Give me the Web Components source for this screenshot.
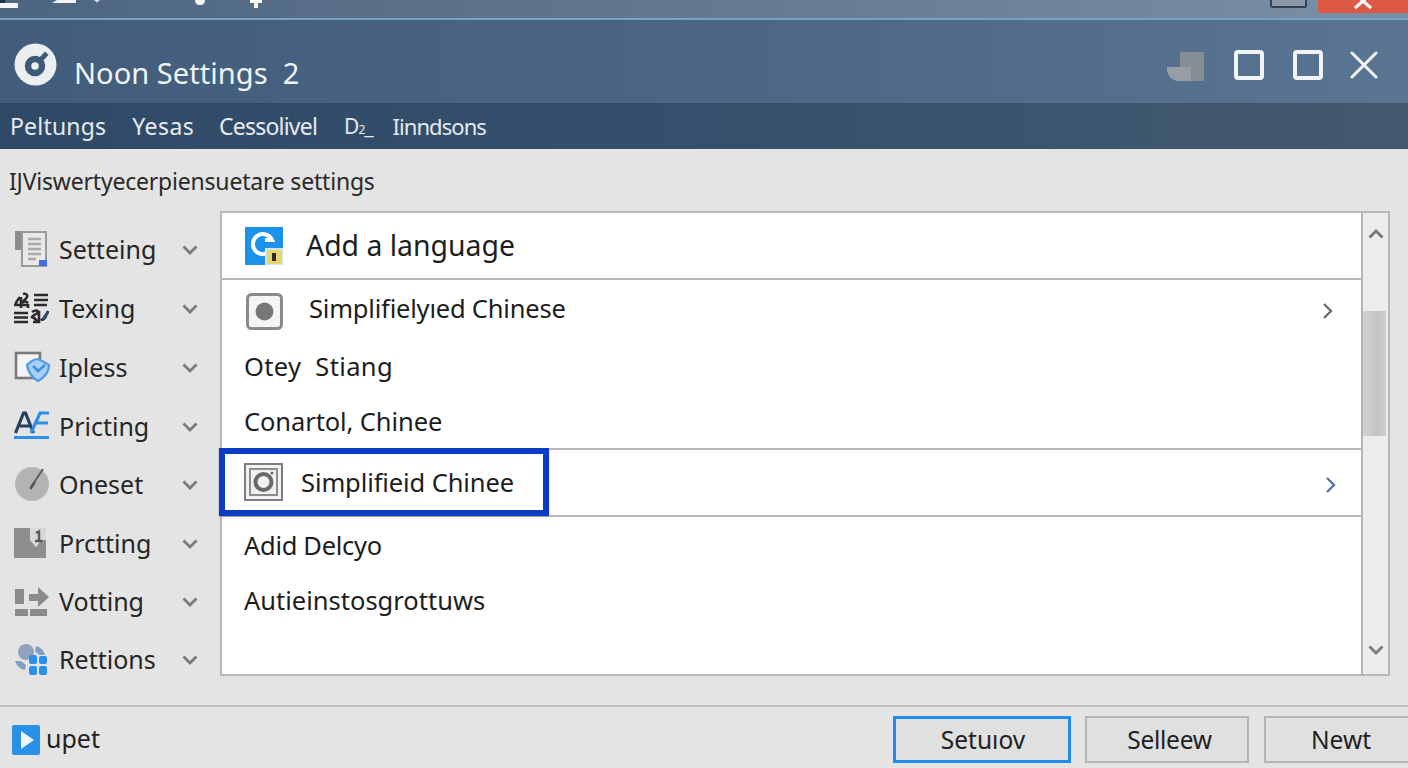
<!DOCTYPE html>
<html><head><meta charset="utf-8"><style>
html,body{margin:0;padding:0;height:100%;overflow:hidden;background:#e3e4e3}
body{font-family:"Noto Sans",sans-serif;color:#222}
</style></head><body>
<settings-window></settings-window>
<script>
function el(name,html,css){
  customElements.define(name,class extends HTMLElement{
    constructor(){super();const r=this.attachShadow({mode:'open'});
      r.innerHTML='<style>'+css+'</style>'+(typeof html==='function'?html(this):html);}
  });
}
const CHEV='<svg width="16" height="10" viewBox="0 0 16 10"><path d="M1.500 1.500 8 8l6.500-6.500" fill="none" stroke="#7b7b7b" stroke-width="2.800"/></svg>';
const ICONS={
 doc:'<svg width="34" height="38" viewBox="0 0 34 38"><rect x="1" y="1" width="15" height="19" fill="#8c8c8c"/><rect x="8" y="2" width="24" height="34" fill="#e9e9e9" stroke="#9a9a9a" stroke-width="2"/><path d="M14 9h13M14 14h13M14 19h13M14 24h13M14 29h8" stroke="#aaa" stroke-width="2.400"/><rect x="25" y="30" width="8" height="6" fill="#3f6fe0"/></svg>',
 tex:'<svg width="38" height="32" viewBox="0 0 38 32" style="margin-left:-2px"><g fill="none" stroke="#2b2b2b" stroke-width="2.600"><path d="M22 3h14M22 8h14M22 13h13M2 21h14M2 25.500h14M2 30h14"/><path d="M2 13h14v3M9 5v11M4 13c-1-3 2-5 4-8M11 2c3-1 5 1 4 3s-3 3-4 5c2-1 4 0 5 1"/><path d="M20 20c3-2 6-2 6 0s-5 3-6 5c2 1 4 1 5 5h-4M27 19v11h-3M29 27c2 2 4 0 7-8"/></g><path d="M31 27l5-7" stroke="#2c4f80" stroke-width="3"/></svg>',
 check:'<svg width="38" height="32" viewBox="0 0 38 32"><rect x="2" y="2" width="24" height="25" fill="#f4f4f4" stroke="#7a7a7a" stroke-width="2.600"/><path d="M13 14c3-3 8-6 11-6 4 2 8 4 11 6 0 7-5 13-11 16-5-3-10-9-11-16z" fill="#a9cff5" stroke="#4d9be6" stroke-width="2.200"/><path d="M19 15l5 5 7-6" fill="none" stroke="#3a8fe0" stroke-width="2.500"/></svg>',
 af:'<svg width="36" height="30" viewBox="0 0 36 30"><path d="M1.500 22 9.500 2h2l8 20M5 15h12" fill="none" stroke="#24405f" stroke-width="3.200"/><path d="M17 22 26 2h9M22 12h12" fill="none" stroke="#2f8fe8" stroke-width="3.200"/><rect x="0" y="25" width="35" height="3" fill="#2d8fe8"/></svg>',
 gauge:'<svg width="36" height="36" viewBox="0 0 36 36"><circle cx="18" cy="18" r="17" fill="#b4b4b4"/><path d="M17 21 29 3" stroke="#5f5f5f" stroke-width="2.200"/><path d="M17 24l-1.500-2 4-6.500 2.500 1.500z" fill="#5a5a5a"/></svg>',
 page:'<svg width="33" height="31" viewBox="0 0 33 31"><path d="M0 1h16v12l6 7 5-7h5v18H0z" fill="#8e8e8e"/><path d="M16 1h16v12h-5l-5 7-6-7z" fill="#d8d8d8"/><path d="M22 6l3-1.500V14M21 14h7" fill="none" stroke="#5c5c5c" stroke-width="2.400"/></svg>',
 vote:'<svg width="36" height="30" viewBox="0 0 36 30"><g fill="#8b8b8b"><rect x="1" y="3" width="9" height="15"/><rect x="1" y="23" width="13" height="7"/><rect x="16" y="23" width="17" height="7"/><path d="M15 8h9V1l11 10-11 10v-6h-9z"/></g></svg>',
 apps:'<svg width="34" height="34" viewBox="0 0 34 34"><circle cx="12" cy="10" r="8" fill="#8ea3bb"/><path d="M1 19c2 5 5 8 10 9l1-5-5-4zM22 4c4 1 8 4 9 9h-6l-4-4z" fill="#7ea0c6"/><g fill="#2b8ff0"><rect x="15" y="13" width="8" height="9" rx="2"/><rect x="25" y="14" width="8" height="8" rx="2"/><rect x="15" y="24" width="8" height="9" rx="2"/><rect x="25" y="24" width="8" height="9" rx="2"/></g></svg>'
};
el('top-strip',`<svg class="frag" width="270" height="9" viewBox="0 0 270 9"><path d="M0 0h5v3h13v5H0z" fill="#f2f4f6"/><rect x="0" y="0" width="5" height="3" fill="#20303f"/><path d="M52 3 57 0h19v3z" fill="#f2f4f6"/><path d="M94 0h6l-3 2.500z" fill="#dfe4e9"/><path d="M195 0h10c0 3-2 5-5 5s-5-2-5-5z" fill="#f6f7f8"/><path d="M250 0h12v3h-4v5h-4V3h-4z" fill="#f6f7f8"/></svg>
<span class="sp"></span><i class="box"></i><b class="close"><svg width="24" height="13" viewBox="0 0 24 13"><path d="M4-6 20 8M20-6 4 8" stroke="#fff" stroke-width="3"/></svg></b>`,
`:host{display:flex;height:18px;border-bottom:2px solid #7c9fc4;box-sizing:content-box;background:linear-gradient(90deg,#4d6581,#64798f 50%,#7b8fa7);align-items:flex-start;overflow:hidden}
.frag{flex:none;display:block}
.sp{flex:1}
.box{display:block;flex:none;width:33px;height:6px;background:#8b99aa;border:2px solid #33404f;border-top:0;border-radius:0 0 3px 3px;margin-right:11px}
.close{display:flex;justify-content:center;width:90px;height:13px;background:#dc5a45;border-radius:0 0 0 2px}`);
el('title-bar',`<svg class="logo" width="44" height="44" viewBox="0 0 44 44"><circle cx="21.500" cy="21.500" r="21" fill="#ecefef"/><circle cx="21" cy="23" r="7" fill="none" stroke="#3d5a78" stroke-width="6.500"/><path d="M23.500 16.500 31 8.500l3.500 3.500-7.500 8z" fill="#3d5a78"/></svg>
<span class="t">Noon Settings&nbsp; 2</span><span class="sp"></span>
<svg class="s" width="38" height="30" viewBox="0 0 38 30"><path d="M13 0h24v29H24V15H13z" fill="#858d97"/><path d="M0 15h24v14H10Q2 27 0 19z" fill="#969da5"/></svg>
<i></i><i></i><svg class="x" width="28" height="28" viewBox="0 0 28 28"><path d="M2 2 26 26M26 2 2 26" stroke="#f2f4f6" stroke-width="3" stroke-linecap="round"/></svg>`,
`:host{display:flex;align-items:center;height:83px;box-sizing:border-box;padding-top:12px;background:linear-gradient(90deg,#415d7b,#4a6684 50%,#5a7592);color:#f0f3f5;padding-left:14px}
.logo{flex:none;margin-top:-5px}.t{font-size:29px;margin-left:16px;margin-top:10px;white-space:nowrap;letter-spacing:.05px}
.sp{flex:1}.s{margin-right:29px;margin-top:-2px}
i{display:block;box-sizing:border-box;width:30px;height:30px;border:4px solid #f2f4f6;border-radius:4px;margin-right:29px;margin-top:-5px}
i+i{margin-right:27px}.x{margin-right:30px;margin-top:-5px}`);
el('menu-bar',`<slot></slot>`,
`:host{display:flex;align-items:center;height:46px;background:linear-gradient(90deg,#2f4a67,#35506c 50%,#43596f);color:#e6eaee;font-size:23px;padding-left:10px;box-sizing:border-box;white-space:nowrap}`);
el('side-item',t=>`<span class="i">${ICONS[t.getAttribute('icon')]}</span><span class="t"><slot></slot></span>${CHEV}`,
`:host{display:flex;align-items:center;height:58.500px;font-size:25px;color:#262626;white-space:nowrap}
.i{width:45px;flex:none;display:flex;align-items:center;margin-left:14px}
.t{flex:1}svg{flex:none;display:block}:host>svg{margin-top:2px}`);
el('list-row',`<slot name="icon"></slot><span class="t"><slot></slot></span><slot name="end"></slot>`,
`:host{display:flex;align-items:center;box-sizing:border-box;height:56px;padding-left:22px;font-size:25.500px;color:#1d1d1d;white-space:nowrap}
:host([line]){border-top:2px solid #b9b9b9}
.t{flex:1;padding-bottom:var(--tb,0);letter-spacing:var(--ls,0)}`);
el('push-button',`<slot></slot>`,
`:host{display:flex;align-items:center;justify-content:center;box-sizing:border-box;height:47px;border:2px solid #b4b4b4;background:#dfe0df;font-size:24.500px;color:#222;white-space:nowrap}
:host([primary]){border:3px solid #1e8cf0}`);
el('scroll-bar',`<div class="u"><svg width="16" height="10" viewBox="0 0 16 10"><path d="M1.500 8.500 8 2l6.500 6.500" fill="none" stroke="#757575" stroke-width="2.800"/></svg></div><div class="th"></div><div class="sp"></div><div class="d">${CHEV}</div>`,
`:host{display:flex;flex-direction:column;width:27px;box-sizing:border-box;background:#ececec;border-left:2px solid #b4b4b4}
.u{height:52px;padding-top:16px;box-sizing:border-box;display:flex;justify-content:center}
.th{height:125px;margin:46px 0 0;width:23px;background:linear-gradient(90deg,#d2d2d2,#c4c4c4 60%,#cdcdcd)}
.sp{flex:1}.d{height:40px;display:flex;justify-content:center;align-items:center;padding-bottom:8px;box-sizing:border-box}`);
el('settings-window',`
<top-strip></top-strip><title-bar></title-bar>
<menu-bar><span style="letter-spacing:.2px;margin-right:26px">Peltungs</span><span style="letter-spacing:.4px;margin-right:25px">Yesas</span><span style="letter-spacing:-.8px;margin-right:27px">Cessolivel</span><span style="margin-right:20px;font-size:21px;letter-spacing:-1px">D<span style="font-size:12px">2</span>_</span><span style="font-size:22px;letter-spacing:-.95px">Iinndsons</span></menu-bar>
<main>
 <div class="hd">IJViswertyecerpiensuetare settings</div>
 <div class="mid">
  <nav>
   <side-item icon="doc">Setteing</side-item><side-item icon="tex">Texing</side-item>
   <side-item icon="check">Ipless</side-item><side-item icon="af">Pricting</side-item>
   <side-item icon="gauge">Oneset</side-item><side-item icon="page">Prctting</side-item>
   <side-item icon="vote">Votting</side-item><side-item icon="apps">Rettions</side-item>
  </nav>
  <section>
   <div class="list">
    <list-row class="h">
     <svg slot="icon" class="ic" width="38" height="38" viewBox="0 0 38 38" style="margin-right:23px"><rect width="38" height="38" fill="#1c92ea"/><path d="M26 23a10 10 0 1 1 1-10h-7" fill="none" stroke="#fff" stroke-width="4"/><rect x="21" y="22" width="17" height="16" fill="#e8d66a" stroke="#cfe6f7" stroke-width="2"/><rect x="27" y="26" width="4" height="8" fill="#2d2d2d"/></svg>
     Add a language</list-row>
    <list-row line class="r1">
     <svg slot="icon" width="37" height="37" viewBox="0 0 37 37" style="margin-left:2px;margin-right:26px;margin-top:4px"><rect x="1.500" y="1.500" width="34" height="34" rx="4" fill="#f4f4f4" stroke="#8a8a8a" stroke-width="3"/><circle cx="18.500" cy="18.500" r="9" fill="#777"/></svg>
     Simplifielyıed Chinese
     <svg slot="end" width="12" height="18" viewBox="0 0 12 18" style="margin-right:27px;margin-top:4px"><path d="M2 2l7 7-7 7" fill="none" stroke="#6d6d6d" stroke-width="2.400"/></svg></list-row>
    <list-row class="p1">Otey&nbsp; Stiang</list-row>
    <list-row class="p2">Conartol, Chinee</list-row>
    <list-row line class="r2">
     <svg slot="icon" width="39" height="38" viewBox="0 0 39 38" style="margin-right:18px;margin-bottom:2px"><rect x="1" y="1" width="37" height="36" fill="#f1f1f1" stroke="#7d7d7d" stroke-width="2"/><rect x="6" y="6" width="27" height="26" fill="none" stroke="#8d8d8d" stroke-width="2"/><circle cx="19.500" cy="19" r="8" fill="none" stroke="#6a6a6a" stroke-width="4"/><circle cx="28" cy="10" r="1.500" fill="#666"/></svg>
     Simplifieid Chinee
     <svg slot="end" width="12" height="18" viewBox="0 0 12 18" style="margin-right:24px;margin-top:4px"><path d="M2 2l7 7-7 7" fill="none" stroke="#56779b" stroke-width="2.400"/></svg></list-row>
    <list-row line class="p3">Adid Delcyo</list-row>
    <list-row class="p4">Autieinstosgrottuws</list-row>
    <div class="focus"></div>
   </div>
   <scroll-bar></scroll-bar>
  </section>
 </div>
 <footer>
  <svg width="28" height="30" viewBox="0 0 28 30"><rect width="28" height="30" rx="2" fill="#2a8fe6"/><path d="M9 6v18l13-9z" fill="#eef5fb"/></svg>
  <span class="up">upet</span><span class="sp"></span>
  <push-button primary style="width:178px;padding-left:2px">Setuıov</push-button>
  <push-button style="width:164px;margin-left:14px;letter-spacing:-.25px;padding-left:5px">Selleew</push-button>
  <push-button style="width:154px;margin-left:15px;margin-right:-10px">Newt</push-button>
 </footer>
</main>`,
`:host{display:flex;flex-direction:column;width:1408px;height:768px;overflow:hidden;font-family:"Noto Sans",sans-serif}
main{flex:1;display:flex;flex-direction:column;background:#e3e4e3;min-height:0}
.hd{height:62px;padding:16px 0 0 9px;box-sizing:border-box;font-size:23px;color:#2a2a2a;white-space:nowrap;letter-spacing:-.2px}
.mid{display:flex;height:494px}
nav{width:220px;flex:none;box-sizing:border-box;padding:8px 22px 0 0}
side-item:nth-child(-n+4){height:59px}side-item:nth-child(n+7){height:58px}
section{display:flex;width:1170px;height:465px;box-sizing:border-box;border:2px solid #b8b8b8;background:#fff}
.list{flex:1;position:relative;min-width:0}
.h{height:65px;font-size:28.400px;padding-left:23px;--tb:2px}
.r1{height:60px;--tb:2px;--ls:-.2px}.p1{height:56px;--ls:.35px}.p2{height:54px;--ls:-.1px}.r2{height:67px;--tb:2px;--ls:-.1px}.p3{height:57px;--ls:-.3px}.p4{height:56px}
.focus{position:absolute;left:-3px;top:235px;width:330px;height:68px;box-sizing:border-box;border:6px solid #0a3cc6;box-shadow:0 1px 2px #0003;pointer-events:none}
footer{flex:1;display:flex;align-items:center;border-top:2px solid #bdbdbd;padding:4px 0 0 12px;font-size:25px}
.up{margin-left:6px;margin-top:-4px}.sp{flex:1}`);
</script>
</body></html>
